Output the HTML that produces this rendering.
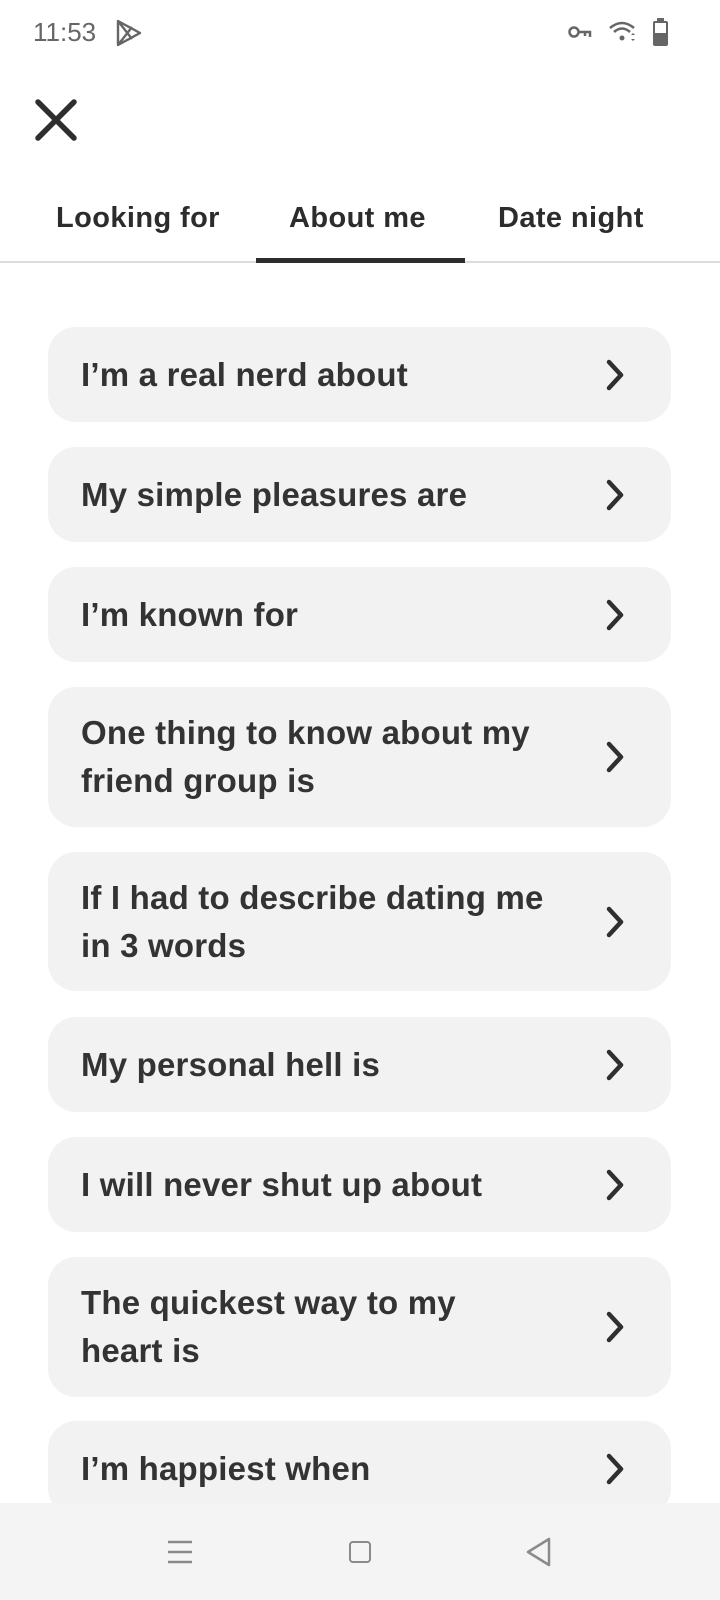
<!DOCTYPE html>
<html><head><meta charset="utf-8"><style>
*{margin:0;padding:0;box-sizing:border-box}
body{width:720px;height:1600px;background:#fff;font-family:"Liberation Sans",sans-serif;color:#2f2f2f;position:relative;overflow:hidden}
.abs{position:absolute}
.tab{position:absolute;top:202px;font-size:29px;font-weight:bold;letter-spacing:0.4px;color:#2c2c2c}
.card{position:absolute;left:48px;width:623px;background:#f2f2f2;border-radius:28px}
.card span{position:absolute;left:33px;top:50%;transform:translateY(-50%);font-size:33px;font-weight:bold;letter-spacing:0.2px;line-height:48px;color:#333;width:500px}
.card svg{position:absolute;right:46px;top:50%;margin-top:-17px}
</style></head><body>
<div class="abs" style="left:33px;top:17px;font-size:26px;color:#666">11:53</div>
<svg class="abs" style="left:115px;top:18px" width="28" height="30" viewBox="0 0 28 30"><path d="M3 3 L25 15 L3 27 Z M3 3 L17 21 M3 27 L17 9" fill="none" stroke="#666" stroke-width="2.4" stroke-linejoin="round"/></svg>
<svg class="abs" style="left:568px;top:24px" width="24" height="16" viewBox="0 0 24 16"><circle cx="6" cy="8" r="4.5" fill="none" stroke="#666" stroke-width="2.5"/><path d="M10 8H22V13M17 8V12" fill="none" stroke="#666" stroke-width="2.5"/></svg>
<svg class="abs" style="left:608px;top:20px" width="30" height="24" viewBox="0 0 30 24"><path d="M2 8 Q14 -2 26 8" fill="none" stroke="#666" stroke-width="2.5"/><path d="M6 12 Q14 5 22 12" fill="none" stroke="#666" stroke-width="2.5"/><circle cx="14" cy="18" r="2.5" fill="#666"/><path d="M25 13l2 2h-4zM25 21l2-2h-4z" fill="#666"/></svg>
<div class="abs" style="left:653px;top:21px;width:15px;height:25px;border-radius:2px;background:#666"></div>
<div class="abs" style="left:657px;top:18px;width:7px;height:4px;background:#666"></div>
<div class="abs" style="left:655px;top:23px;width:11px;height:10px;background:#fff"></div>
<svg class="abs" style="left:34px;top:98px" width="44" height="44" viewBox="0 0 44 44"><path d="M4 4L40 40M40 4L4 40" stroke="#2f2f2f" stroke-width="5.5" stroke-linecap="round"/></svg>
<div class="tab" style="left:56px">Looking for</div>
<div class="tab" style="left:289px">About me</div>
<div class="tab" style="left:498px">Date night</div>
<div class="abs" style="left:0;top:261px;width:720px;height:2px;background:#dcdcdc"></div>
<div class="abs" style="left:256px;top:258px;width:209px;height:5px;background:#2c2c2c"></div>

<div class="card" style="top:327px;height:95px"><span>I’m a real nerd about</span><svg width="20" height="34" viewBox="0 0 20 34"><path d="M4 4L16 17L4 30" fill="none" stroke="#2f2f2f" stroke-width="4.5" stroke-linecap="round" stroke-linejoin="round"/></svg></div>
<div class="card" style="top:447px;height:95px"><span>My simple pleasures are</span><svg width="20" height="34" viewBox="0 0 20 34"><path d="M4 4L16 17L4 30" fill="none" stroke="#2f2f2f" stroke-width="4.5" stroke-linecap="round" stroke-linejoin="round"/></svg></div>
<div class="card" style="top:567px;height:95px"><span>I’m known for</span><svg width="20" height="34" viewBox="0 0 20 34"><path d="M4 4L16 17L4 30" fill="none" stroke="#2f2f2f" stroke-width="4.5" stroke-linecap="round" stroke-linejoin="round"/></svg></div>
<div class="card" style="top:687px;height:140px"><span>One thing to know about my<br>friend group is</span><svg width="20" height="34" viewBox="0 0 20 34"><path d="M4 4L16 17L4 30" fill="none" stroke="#2f2f2f" stroke-width="4.5" stroke-linecap="round" stroke-linejoin="round"/></svg></div>
<div class="card" style="top:852px;height:139px"><span>If I had to describe dating me<br>in 3 words</span><svg width="20" height="34" viewBox="0 0 20 34"><path d="M4 4L16 17L4 30" fill="none" stroke="#2f2f2f" stroke-width="4.5" stroke-linecap="round" stroke-linejoin="round"/></svg></div>
<div class="card" style="top:1017px;height:95px"><span>My personal hell is</span><svg width="20" height="34" viewBox="0 0 20 34"><path d="M4 4L16 17L4 30" fill="none" stroke="#2f2f2f" stroke-width="4.5" stroke-linecap="round" stroke-linejoin="round"/></svg></div>
<div class="card" style="top:1137px;height:95px"><span>I will never shut up about</span><svg width="20" height="34" viewBox="0 0 20 34"><path d="M4 4L16 17L4 30" fill="none" stroke="#2f2f2f" stroke-width="4.5" stroke-linecap="round" stroke-linejoin="round"/></svg></div>
<div class="card" style="top:1257px;height:140px"><span>The quickest way to my<br>heart is</span><svg width="20" height="34" viewBox="0 0 20 34"><path d="M4 4L16 17L4 30" fill="none" stroke="#2f2f2f" stroke-width="4.5" stroke-linecap="round" stroke-linejoin="round"/></svg></div>
<div class="card" style="top:1421px;height:95px"><span>I’m happiest when</span><svg width="20" height="34" viewBox="0 0 20 34"><path d="M4 4L16 17L4 30" fill="none" stroke="#2f2f2f" stroke-width="4.5" stroke-linecap="round" stroke-linejoin="round"/></svg></div>

<div class="abs" style="left:0;top:1503px;width:720px;height:97px;background:#f4f4f4"></div>
<svg class="abs" style="left:167px;top:1540px" width="26" height="24" viewBox="0 0 26 24"><path d="M1 2H25M1 12H25M1 22H25" stroke="#8a8a8a" stroke-width="2.5"/></svg>
<div class="abs" style="left:349px;top:1541px;width:22px;height:22px;border:2.5px solid #8a8a8a;border-radius:4px"></div>
<svg class="abs" style="left:525px;top:1537px" width="28" height="30" viewBox="0 0 28 30"><path d="M24 2V28L3 15Z" fill="none" stroke="#8a8a8a" stroke-width="2.5" stroke-linejoin="round"/></svg>
</body></html>
